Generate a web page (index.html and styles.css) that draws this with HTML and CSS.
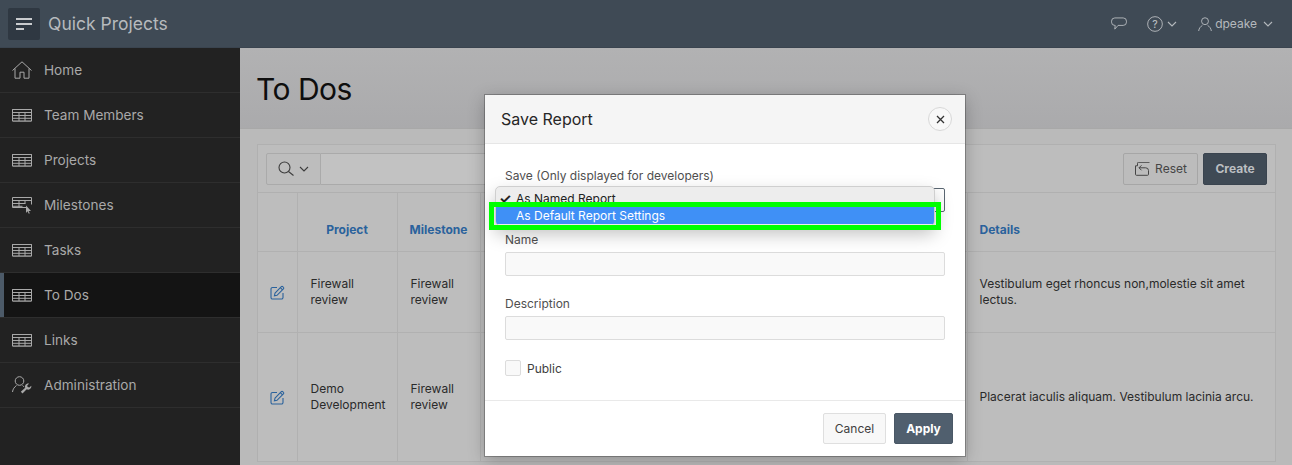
FILE: index.html
```html
<!DOCTYPE html>
<html lang="en">
<head>
<meta charset="utf-8">
<title>To Dos</title>
<link rel="stylesheet" href="styles.css">
</head>
<body>
<svg class="defs" width="0" height="0" aria-hidden="true">
  <symbol id="i-table" viewBox="0 0 20 14">
    <path d="M.5 1.500h19v11.500H.5zM.5 1.500h19v3h-19zM.5 7.500h19M.5 10.300h19M7 4.500V13M13 4.500V13" fill="none" stroke="currentColor"/>
    <path d="M.5 13.300h19" fill="none" stroke="currentColor" opacity=".6"/>
  </symbol>
  <symbol id="i-edit" viewBox="0 0 15 15">
    <path d="M13 8v4.500a1.500 1.500 0 0 1-1.500 1.500H2.500A1.500 1.500 0 0 1 1 12.500V4a1.500 1.500 0 0 1 1.500-1.500H7" fill="none" stroke="currentColor" stroke-width="1.100"/>
    <path d="M5 8.200 11.300 1.700a1 1 0 0 1 1.500 0l.6.600a1 1 0 0 1 0 1.500L7 10.300l-2.600.5zM10.400 2.700l2.100 2.100" fill="none" stroke="currentColor" stroke-width="1.100"/>
  </symbol>
  <symbol id="i-chev" viewBox="0 0 10 6">
    <path d="M1 1l4 4 4-4" fill="none" stroke="currentColor" stroke-width="1.100"/>
  </symbol>
</svg>

<header class="topbar">
  <button class="menu-btn" type="button" aria-label="Menu">
    <svg width="16" height="12" viewBox="0 0 16 12"><path d="M0 1h16M0 6h16M0 11h8" stroke="currentColor" stroke-width="2" fill="none"/></svg>
  </button>
  <span class="app-name">Quick Projects</span>
  <nav class="top-actions">
    <svg class="top-icon" width="16" height="14" viewBox="0 0 17 15"><path d="M4 1h9a3.500 3.500 0 0 1 3.500 3.500v1A3.500 3.500 0 0 1 13 9H7.500L4 13l.4-4H4A3.500 3.500 0 0 1 .5 5.500v-1A3.500 3.500 0 0 1 4 1z" fill="none" stroke="currentColor"/></svg>
    <span class="top-group help">
      <svg class="top-icon" width="16" height="16" viewBox="0 0 17 17"><circle cx="8.500" cy="8.500" r="7.800" fill="none" stroke="currentColor"/><text x="8.500" y="12.300" text-anchor="middle" class="q">?</text></svg>
      <svg class="chev" width="10" height="6"><use href="#i-chev"/></svg>
    </span>
    <span class="top-group user">
      <svg class="top-icon" width="14" height="16" viewBox="0 0 15 16"><circle cx="7.500" cy="5" r="3.700" fill="none" stroke="currentColor"/><path d="M.7 15.500c.3-3 2.300-5 4-6M14.300 15.500c-.3-3-2.300-5-4-6" fill="none" stroke="currentColor"/></svg>
      <span class="user-name">dpeake</span>
      <svg class="chev" width="10" height="6"><use href="#i-chev"/></svg>
    </span>
  </nav>
</header>

<div class="shell">
  <aside class="sidebar">
    <a class="nav-item"><svg class="nav-icon" viewBox="0 0 20 18"><path d="M.5 9.500 10 .8l9.500 8.700M3 7.500v9.700h5v-6h4v6h5V7.500" fill="none" stroke="currentColor"/></svg><span>Home</span></a>
    <a class="nav-item"><svg class="nav-icon"><use href="#i-table"/></svg><span>Team Members</span></a>
    <a class="nav-item"><svg class="nav-icon"><use href="#i-table"/></svg><span>Projects</span></a>
    <a class="nav-item"><svg class="nav-icon" viewBox="0 0 20 18"><path d="M14 11.500H.5v-10h19v7M.5 4.500h19M.5 7.500h13M.5 10.300h10M7 4.500v7M13 4.500v3" fill="none" stroke="currentColor"/><path d="M14 9.500v7.500l1.500-1.700 1.300 2.500 1-.5-1.200-2.400h2.400z" fill="currentColor"/></svg><span>Milestones</span></a>
    <a class="nav-item"><svg class="nav-icon"><use href="#i-table"/></svg><span>Tasks</span></a>
    <a class="nav-item is-active"><svg class="nav-icon"><use href="#i-table"/></svg><span>To Dos</span></a>
    <a class="nav-item"><svg class="nav-icon"><use href="#i-table"/></svg><span>Links</span></a>
    <a class="nav-item"><svg class="nav-icon" viewBox="0 0 20 18"><circle cx="7.500" cy="5" r="4.300" fill="none" stroke="currentColor"/><path d="M.5 16c.3-3 2-5 4-6.500M10.500 9.500c.7.500 1.300 1 1.700 1.600" fill="none" stroke="currentColor"/><path d="M10.500 17.500l4.200-4.200a3.200 3.200 0 0 0 4-1 3 3 0 0 0 .6-2.600l-2 1.800-1.700-.5-.4-1.600 1.900-1.900c-1.500-.3-3 .3-3.700 1.500a3 3 0 0 0-.2 2.700L8.800 15.800z" fill="currentColor"/></svg><span>Administration</span></a>
  </aside>

  <main class="main">
    <div class="page-title"><h1>To Dos</h1></div>
    <section class="report">
      <div class="toolbar">
        <div class="search">
          <span class="search-btn">
            <svg width="16" height="15" viewBox="0 0 16 15"><circle cx="6.500" cy="6.500" r="5.500" fill="none" stroke="currentColor" stroke-width="1.100"/><path d="M10.500 10.500l5 4" stroke="currentColor" stroke-width="1.100" fill="none"/></svg>
            <svg class="chev" width="10" height="6"><use href="#i-chev"/></svg>
          </span>
          <span class="search-field"></span>
        </div>
        <button class="btn reset" type="button">
          <svg width="15" height="14" viewBox="0 0 15 14"><path d="M2.500 4V1.500a1 1 0 0 1 1-1H14.500v0M2.500 4H.5v8.500a1 1 0 0 0 1 1h11a1 1 0 0 0 1-1V8.800A2.800 2.800 0 0 0 10.700 6H4M6.500 3.500 4 6l2.500 2.500" fill="none" stroke="currentColor" transform="translate(0 -.2)"/></svg>
          Reset
        </button>
        <button class="btn create" type="button">Create</button>
      </div>
      <table class="grid">
        <colgroup>
          <col class="c-edit"><col class="c-project"><col class="c-mile"><col class="c-hidden"><col>
        </colgroup>
        <thead>
          <tr><th></th><th class="center">Project</th><th class="center">Milestone</th><th></th><th>Details</th></tr>
        </thead>
        <tbody>
          <tr class="r1">
            <td class="edit"><svg width="15" height="15"><use href="#i-edit"/></svg></td>
            <td>Firewall review</td><td>Firewall review</td><td></td>
            <td>Vestibulum eget rhoncus non,molestie sit amet lectus.</td>
          </tr>
          <tr class="r2">
            <td class="edit"><svg width="15" height="15"><use href="#i-edit"/></svg></td>
            <td>Demo Development</td><td>Firewall review</td><td></td>
            <td>Placerat iaculis aliquam. Vestibulum lacinia arcu.</td>
          </tr>
        </tbody>
      </table>
    </section>
  </main>
</div>

<div class="modal" role="dialog">
  <div class="modal-head">
    <h2>Save Report</h2>
    <button class="close" type="button" aria-label="Close">
      <svg width="9" height="9" viewBox="0 0 9 9"><path d="M1 1l7 7M8 1 1 8" stroke="currentColor" stroke-width="1.300" fill="none"/></svg>
    </button>
  </div>
  <div class="modal-body">
    <div class="field">
      <label>Save (Only displayed for developers)</label>
      <div class="input select-base"></div>
    </div>
    <div class="field">
      <label>Name</label>
      <div class="input"></div>
    </div>
    <div class="field">
      <label>Description</label>
      <div class="input"></div>
    </div>
    <div class="check-row">
      <span class="checkbox"></span>
      <span>Public</span>
    </div>
  </div>
  <div class="modal-foot">
    <button class="btn cancel" type="button">Cancel</button>
    <button class="btn apply" type="button">Apply</button>
  </div>
  <div class="dropdown">
    <div class="opt"><span class="tick">✓</span>As Named Report</div>
    <div class="opt is-hover">As Default Report Settings</div>
  </div>
  <div class="highlight"></div>
</div>
</body>
</html>
```
FILE: styles.css
```css
* { box-sizing: border-box; }
html, body { margin: 0; height: 100%; overflow: hidden; }
body {
  width: 1292px;
  height: 465px;
  font-family: Inter, "Liberation Sans", sans-serif;
  font-size: 12px;
  color: #2a2a2a;
  background: #bababa;
  position: relative;
}
.defs { position: absolute; }
button { font-family: inherit; }

/* top bar */
.topbar {
  height: 48px;
  display: flex;
  align-items: center;
  padding: 0 19px 0 8px;
  background: #3f4a55;
  border-bottom: 1px solid #3a444f;
  color: #c1c4c7;
}
.menu-btn {
  width: 32px;
  height: 32px;
  border: 0;
  border-radius: 2px;
  padding: 0;
  background: #2f3842;
  color: #c9cbce;
  display: flex;
  align-items: center;
  justify-content: center;
}
.app-name { margin-left: 8px; font-size: 17.5px; color: #b7babd; }
.top-actions { margin-left: auto; display: flex; align-items: center; color: #b5b9bd; }
.top-group { display: flex; align-items: center; }
.help { margin-left: 20px; gap: 4px; }
.user { margin-left: 21px; gap: 3px; }
.user-name { font-size: 12px; margin: 0 3px 0 0; }
.q { font: 500 11px Inter, sans-serif; fill: currentColor; }

/* layout */
.shell { display: flex; height: 417px; }
.sidebar { width: 240px; flex: none; background: #222; }
.nav-item {
  height: 45px;
  display: flex;
  align-items: center;
  gap: 12px;
  padding: 0 0 1px 12px;
  font-size: 13.6px;
  color: #a9a9a9;
  border-bottom: 1px solid #2e2e2e;
}
.nav-item.is-active { background: #141414; box-shadow: inset 4px 0 0 #4c5a68; }
.nav-icon { width: 20px; height: 18px; flex: none; color: #a9a9a9; }

/* main */
.main { flex: 1; min-width: 0; }
.page-title {
  height: 81px;
  padding: 23px 0 0 16px;
  background: linear-gradient(#b2b2b3, #aaaaac);
  border-bottom: 1px solid #a8a8a8;
}
.page-title h1 { margin: 0; font-size: 30px; line-height: 36px; font-weight: 400; letter-spacing: -.5px; color: #0e0e0e; }
.report {
  margin: 15px 16px 0 17px;
  background: #bdbdbd;
  border: 1px solid #b0b0b0;
  border-bottom: 0;
}
.toolbar {
  height: 48px;
  display: flex;
  align-items: center;
  gap: 5px;
  padding: 0 8px;
  border-bottom: 1px solid #b0b0b0;
}
.search { flex: 1; height: 32px; display: flex; }
.search-btn {
  width: 55px;
  display: flex;
  align-items: center;
  justify-content: center;
  gap: 5px;
  color: #3c3c3c;
  border: 1px solid #aaa;
  border-radius: 2px 0 0 2px;
}
.search-field { flex: 1; border: 1px solid #aaa; border-left: 0; background: #c2c2c2; margin-right: 200px; }
.btn {
  height: 32px;
  font-size: 12px;
  border-radius: 2px;
  padding: 0 12px;
  display: flex;
  align-items: center;
  justify-content: center;
}
.reset { width: 75px; gap: 5px; padding: 0 0 0 1px; background: #bcbcbc; border: 1px solid #a6a6a6; color: #454545; }
.create { width: 64px; font-weight: 700; background: #3f4a55; border: 1px solid #3a444f; color: #bcbfc2; }

.grid { width: 100%; table-layout: fixed; border-collapse: collapse; }
.c-edit { width: 39px; }
.c-project { width: 100px; }
.c-mile { width: 83px; }
.c-hidden { width: 487px; }
.grid th, .grid td { border: 1px solid #b1b1b1; border-top: 0; padding: 0 12px 0 13px; line-height: 16px; text-align: left; vertical-align: middle; }
.grid th:first-child, .grid td:first-child { border-left: 0; }
.grid th:last-child, .grid td:last-child { border-right: 0; padding-left: 12px; }
.grid thead tr { height: 58px; }
.grid th { font-weight: 700; color: #2a629c; padding-top: 16px; }
.grid th.center { text-align: center; padding: 16px 0 0; }
.r1 { height: 81px; }
.r2 { height: 129px; }
.edit { color: #2a629c; text-align: center !important; padding: 0 !important; }
.edit svg { display: inline-block; vertical-align: middle; }

/* modal */
.modal {
  position: absolute;
  left: 485px;
  top: 95px;
  width: 480px;
  height: 361px;
  background: #fff;
  box-shadow: 0 0 0 1px rgba(0,0,0,.25), 0 4px 16px rgba(0,0,0,.25);
  display: flex;
  flex-direction: column;
  color: #404040;
}
.modal-head {
  height: 49px;
  flex: none;
  display: flex;
  align-items: center;
  justify-content: space-between;
  padding: 0 13px 0 16px;
  background: #f5f5f5;
  border-bottom: 1px solid #e6e6e6;
}
.modal-head h2 { margin: 0; font-size: 16px; font-weight: 400; color: #262626; }
.close {
  width: 24px;
  height: 24px;
  border-radius: 50%;
  border: 1px solid #d8d8d8;
  background: #f8f8f8;
  padding: 0;
  color: #333;
  display: flex;
  align-items: center;
  justify-content: center;
}
.modal-body { flex: 1; padding: 24px 20px 0; }
.field { margin-bottom: 20px; }
.field label { display: block; line-height: 16px; margin-bottom: 4px; color: #4f4f4f; }
.input { height: 24px; background: #f9f9f9; border: 1px solid #dcdcdc; border-radius: 2px; }
.select-base { background: #fff; border-color: #5a6672; }
.check-row { display: flex; align-items: center; gap: 6px; height: 16px; color: #404040; }
.checkbox { width: 16px; height: 16px; background: #f9f9f9; border: 1px solid #dcdcdc; border-radius: 2px; }
.modal-foot {
  height: 56px;
  flex: none;
  display: flex;
  align-items: center;
  justify-content: flex-end;
  gap: 8px;
  padding: 0 12px;
  border-top: 1px solid #e9e9e9;
}
.cancel { width: 63px; height: 31px; background: #f8f8f8; border: 1px solid #dfdfdf; color: #404040; }
.apply { width: 59px; height: 31px; font-weight: 700; background: #505f6e; border: 1px solid #4a5866; color: #fff; }

/* native select popup */
.dropdown {
  position: absolute;
  left: 10px;
  top: 91px;
  width: 440px;
  height: 40px;
  padding-top: 3px;
  background: #ededed;
  border: 1px solid #cfcfcf;
  border-radius: 5px;
  box-shadow: 0 8px 18px rgba(0,0,0,.25);
  overflow: hidden;
  color: #222;
}
.opt { height: 17px; line-height: 17px; padding-left: 20px; position: relative; }
.tick { position: absolute; left: 3px; font-size: 14px; font-weight: 700; }
.opt.is-hover { background: #3f90f6; color: #fff; }
.highlight {
  position: absolute;
  left: 4px;
  top: 107px;
  width: 452px;
  height: 28px;
  border: 5px solid #00ff00;
  pointer-events: none;
}
```
